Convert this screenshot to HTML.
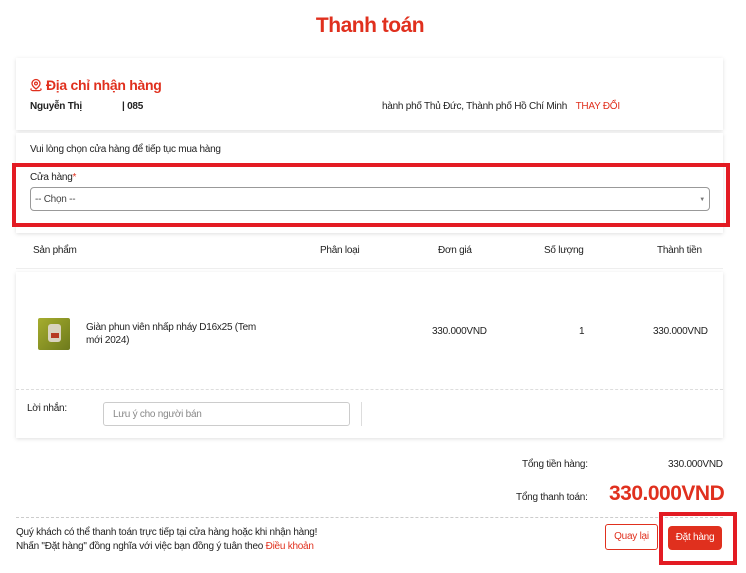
<!DOCTYPE html>
<html><head><meta charset="utf-8"><style>
*{margin:0;padding:0;box-sizing:border-box}
body{width:746px;height:573px;background:#fff;font-family:"Liberation Sans",Arial,sans-serif;font-size:10px;color:#222;position:relative;overflow:hidden;letter-spacing:-0.25px}
.a{position:absolute;white-space:nowrap}
.card{position:absolute;background:#fff;box-shadow:0 1px 4px rgba(0,0,0,.13)}
.red{color:#e0301e}
</style></head><body>
<div class="a red" style="left:0;width:740px;text-align:center;top:14px;font-size:21px;font-weight:bold;letter-spacing:-0.5px">Thanh toán</div>

<div class="card" style="left:16px;top:58px;width:707px;height:72px"></div>
<svg class="a" style="left:29px;top:78px" width="14" height="14" viewBox="0 0 14 14"><path d="M7 1.5a4 4 0 0 1 4 4c0 2.5-4 5.5-4 5.5s-4-3-4-5.5a4 4 0 0 1 4-4z" fill="none" stroke="#e0301e" stroke-width="1.3"/><circle cx="7" cy="5.5" r="1.4" fill="none" stroke="#e0301e" stroke-width="1.2"/><path d="M2.5 10.5c-1 .6-1 1.6 1 2.1h7c2-.5 2-1.5 1-2.1" fill="none" stroke="#e0301e" stroke-width="1.2"/></svg>
<div class="a red" style="left:46px;top:77px;font-size:14px;font-weight:bold;letter-spacing:-0.3px">Địa chỉ nhận hàng</div>
<div class="a" style="left:30px;top:101px;font-weight:bold">Nguyễn Thị</div>
<div class="a" style="left:122px;top:101px;font-weight:bold">| 085</div>
<div class="a" style="left:382px;top:101px">hành phố Thủ Đức, Thành phố Hồ Chí Minh <span class="red" style="margin-left:6px">THAY ĐỔI</span></div>

<div class="card" style="left:16px;top:133px;width:707px;height:100px"></div>
<div class="a" style="left:30px;top:144px">Vui lòng chọn cửa hàng để tiếp tục mua hàng</div>
<div class="a" style="left:12px;top:163px;width:718px;height:64px;border:4px solid #e31b23"></div>
<div class="a" style="left:30px;top:172px">Cửa hàng<span class="red">*</span></div>
<div class="a" style="left:30px;top:187px;width:680px;height:24px;border:1px solid #999;border-radius:4px;padding:6px 4px;color:#444">-- Chọn --<span style="position:absolute;right:4px;top:9px;font-size:6px;color:#777">▼</span></div>

<div class="a" style="left:33px;top:245px">Sản phẩm</div>
<div class="a" style="left:320px;top:245px">Phân loại</div>
<div class="a" style="left:438px;top:245px">Đơn giá</div>
<div class="a" style="left:544px;top:245px">Số lượng</div>
<div class="a" style="left:657px;top:245px">Thành tiền</div>
<div class="a" style="left:16px;top:268px;width:707px;height:1px;background:#eee"></div>

<div class="card" style="left:16px;top:272px;width:707px;height:166px"></div>
<div class="a" style="left:38px;top:318px;width:32px;height:32px;background:linear-gradient(135deg,#a6ad2e,#6d7a1c);border-radius:2px"><div style="position:absolute;left:10px;top:6px;width:13px;height:18px;background:#d9d3c0;border-radius:3px"></div><div style="position:absolute;left:13px;top:15px;width:8px;height:5px;background:#b63a22"></div></div>
<div class="a" style="left:86px;top:321px;line-height:13px">Giàn phun viên nhấp nháy D16x25 (Tem<br>mới 2024)</div>
<div class="a" style="left:432px;top:326px">330.000VND</div>
<div class="a" style="left:579px;top:326px">1</div>
<div class="a" style="left:653px;top:326px">330.000VND</div>
<div class="a" style="left:16px;top:389px;width:707px;border-top:1px dashed #ddd"></div>
<div class="a" style="left:27px;top:403px">Lời nhắn:</div>
<div class="a" style="left:103px;top:402px;width:247px;height:24px;border:1px solid #ccc;border-radius:3px;padding:6px 9px;color:#888">Lưu ý cho người bán</div>
<div class="a" style="left:361px;top:402px;width:1px;height:24px;background:#ddd"></div>

<div class="a" style="left:522px;top:459px">Tổng tiền hàng:</div>
<div class="a" style="left:668px;top:459px">330.000VND</div>
<div class="a" style="left:516px;top:492px">Tổng thanh toán:</div>
<div class="a red" style="left:609px;top:482px;font-size:21px;font-weight:bold;letter-spacing:-0.5px">330.000VND</div>
<div class="a" style="left:16px;top:517px;width:707px;border-top:1px dashed #ccc"></div>
<div class="a" style="left:16px;top:526px;line-height:14px">Quý khách có thể thanh toán trực tiếp tại cửa hàng hoặc khi nhận hàng!<br>Nhấn "Đặt hàng" đồng nghĩa với việc bạn đồng ý tuân theo <span class="red">Điều khoản</span></div>
<div class="a red" style="left:605px;top:524px;width:53px;height:26px;border:1px solid #e0301e;border-radius:3px;text-align:center;line-height:24px">Quay lại</div>
<div class="a" style="left:659px;top:512px;width:78px;height:53px;border:4px solid #e31b23"></div>
<div class="a" style="left:668px;top:526px;width:54px;height:24px;background:#e0301e;color:#fff;border-radius:4px;text-align:center;line-height:24px">Đặt hàng</div>
</body></html>
